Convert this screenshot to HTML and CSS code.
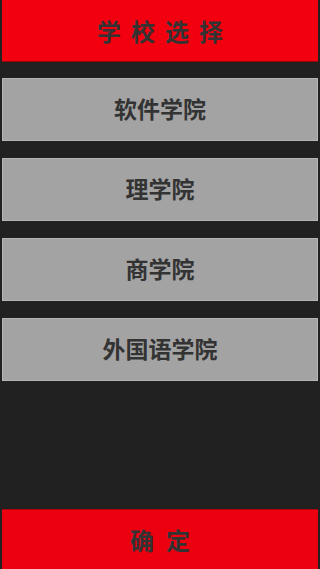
FILE: index.html
```html
<!DOCTYPE html>
<html lang="zh">
<head>
<meta charset="utf-8">
<link rel="stylesheet" href="styles.css">
</head>
<body>
<div class="screen">
  <header class="title-bar">学校选择</header>
  <ul class="school-list">
    <li class="school">软件学院</li>
    <li class="school">理学院</li>
    <li class="school">商学院</li>
    <li class="school">外国语学院</li>
  </ul>
  <footer class="confirm">确定</footer>
</div>
</body>
</html>
```
FILE: styles.css
```css
html, body {
  margin: 0;
  padding: 0;
  background: #212121;
}
.screen {
  width: 320px;
  height: 569px;
  box-sizing: border-box;
  padding: 0 2px;
  display: flex;
  flex-direction: column;
  font-family: "Noto Sans CJK SC", "Noto Sans", sans-serif;
  font-weight: 700;
  color: #333333;
}
.title-bar {
  height: 62px;
  box-sizing: border-box;
  background: #f2000f;
  border-bottom: 1px solid #9a0008;
  display: flex;
  align-items: center;
  justify-content: center;
  font-size: 24px;
  letter-spacing: 10px;
  padding-left: 10px;
}
.school-list {
  list-style: none;
  margin: 16px 0 0;
  padding: 0;
  display: flex;
  flex-direction: column;
  gap: 17px;
}
.school {
  height: 63px;
  box-sizing: border-box;
  background: #a3a3a3;
  border: 1px solid #b4b4b4;
  display: flex;
  align-items: center;
  justify-content: center;
  font-size: 23px;
  padding-bottom: 3px;
}
.confirm {
  margin-top: auto;
  height: 60px;
  box-sizing: border-box;
  background: #ec0010;
  border-top: 1px solid #b0000a;
  display: flex;
  align-items: center;
  justify-content: center;
  font-size: 24px;
  letter-spacing: 12px;
  padding-left: 12px;
}
```
